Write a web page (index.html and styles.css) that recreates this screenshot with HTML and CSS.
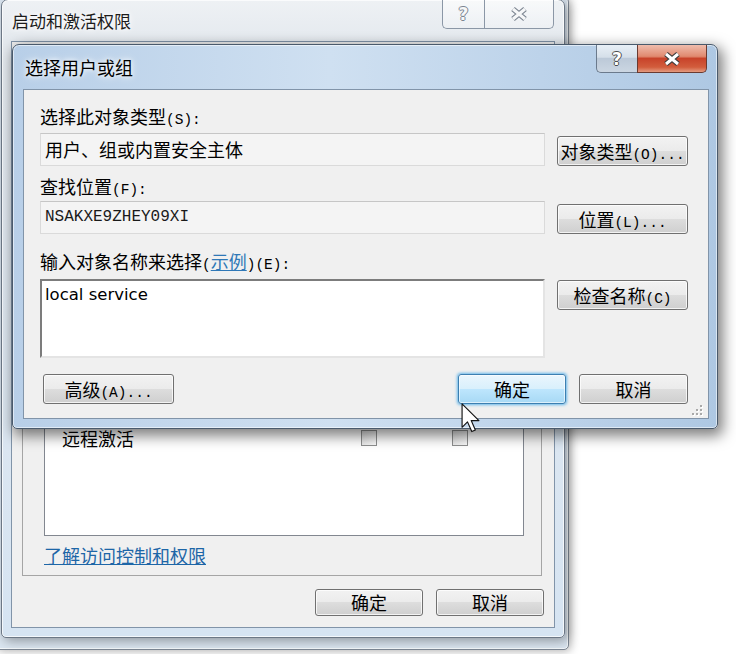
FILE: index.html
```html
<!DOCTYPE html>
<html lang="zh-CN">
<head>
    <meta charset="UTF-8">
    <meta name="viewport" content="width=device-width, initial-scale=1.0">
    <title>选择用户或组</title>
    <link rel="stylesheet" href="styles.css">
</head>
<body>
    <div id="desk">
        <div class="win ghost"></div>

        <div class="win back">
            <div class="tbar">
                <div class="ttl">启动和激活权限</div>
                <div class="caps">
                    <span class="cap help">?</span>
                    <span class="cap close">
                        <svg width="22" height="16" viewBox="0 0 22 16"><path class="xo" d="M5 3 L17 13 M17 3 L5 13"/><path class="xi" d="M5 3 L17 13 M17 3 L5 13"/></svg>
                    </span>
                </div>
            </div>
            <div class="client">
                <div class="page">
                    <!-- rows above this one sit under the front dialog -->
                    <div class="acl">
                        <div class="acl-row"><span>远程激活</span><i class="cb"></i><i class="cb"></i></div>
                    </div>
                    <a class="link" href="#">了解访问控制和权限</a>
                </div>
                <div class="foot">
                    <button class="btn">确定</button>
                    <button class="btn">取消</button>
                </div>
            </div>
        </div>

        <div class="win front">
            <div class="tbar">
                <div class="ttl">选择用户或组</div>
                <div class="caps">
                    <span class="cap help">?</span>
                    <span class="cap close">
                        <svg width="22" height="16" viewBox="0 0 22 16"><path class="xo" d="M5 3 L17 13 M17 3 L5 13"/><path class="xi" d="M5 3 L17 13 M17 3 L5 13"/></svg>
                    </span>
                </div>
            </div>
            <div class="client">
                <div class="lbl">选择此对象类型<span class="k">(S):</span></div>
                <div class="row r1">
                    <div class="field">用户、组或内置安全主体</div>
                    <button class="btn">对象类型<span class="k">(O)...</span></button>
                </div>
                <div class="lbl l2">查找位置<span class="k">(F):</span></div>
                <div class="row r2">
                    <div class="field mono">NSAKXE9ZHEY09XI</div>
                    <button class="btn">位置<span class="k">(L)...</span></button>
                </div>
                <div class="lbl l3">输入对象名称来选择<span class="k">(</span><a class="link" href="#">示例</a><span class="k">)(E):</span></div>
                <div class="row r3">
                    <div class="names">local service</div>
                    <button class="btn">检查名称<span class="k">(C)</span></button>
                </div>
                <div class="row r4">
                    <button class="btn adv">高级<span class="k">(A)...</span></button>
                    <button class="btn def">确定</button>
                    <button class="btn cancel">取消</button>
                </div>
                <svg class="grip" width="12" height="12" viewBox="0 0 12 12">
                    <g fill="#fff"><rect x="10" y="2" width="2" height="2"/><rect x="6" y="6" width="2" height="2"/><rect x="10" y="6" width="2" height="2"/><rect x="2" y="10" width="2" height="2"/><rect x="6" y="10" width="2" height="2"/><rect x="10" y="10" width="2" height="2"/></g>
                    <g fill="#a9a9a9"><rect x="9" y="1" width="2" height="2"/><rect x="5" y="5" width="2" height="2"/><rect x="9" y="5" width="2" height="2"/><rect x="1" y="9" width="2" height="2"/><rect x="5" y="9" width="2" height="2"/><rect x="9" y="9" width="2" height="2"/></g>
                </svg>
            </div>
        </div>

        <svg class="cursor" width="19" height="30" viewBox="0 0 13 21">
            <path d="M0.6 0.6 V17 L4.4 13.2 L7.4 20 L9.9 18.9 L7 12.3 H12.4 Z" fill="#fff" stroke="#111" stroke-width="0.8" stroke-linejoin="round"/>
        </svg>
    </div>
</body>
</html>
```

FILE: styles.css
```css
body{
    margin: 0;
    background: #fff;
    font-family: "Noto Sans CJK SC", sans-serif;
    font-size: 18px;
    color: #000;
}
#desk{
    position: relative;
    width: 736px;
    height: 654px;
    overflow: hidden;
}

/* windows */
.win{
    position: absolute;
    box-sizing: border-box;
    border: 1px solid #56626f;
    border-radius: 7px 7px 5px 5px;
    display: flex;
    flex-direction: column;
}
.ghost{
    left: -5px;
    top: -5px;
    width: 574px;
    height: 655px;
    background: #dbe6f1;
    border-color: #7d8794;
    box-shadow: 2px 2px 8px rgba(0,0,0,.25), inset 0 0 0 1px rgba(255,255,255,.7);
}
.back{
    left: 1px;
    top: -1px;
    width: 564px;
    height: 639px;
    background: linear-gradient(180deg, #eef1f4 0, #e5eaef 40px, #d6e4f2 100%);
    border-color: #6c7785;
    box-shadow: 3px 3px 12px rgba(0,0,0,.35), inset 0 0 0 1px rgba(255,255,255,.7);
}
.front{
    left: 12px;
    top: 44px;
    width: 706px;
    height: 385px;
    background: linear-gradient(90deg, #b8cfe8, #cfe0f1 45%, #bdd3ea 75%, #aec8e3);
    border-color: #4a5a6c;
    box-shadow: 3px 5px 14px 2px rgba(0,0,0,.5), inset 0 0 0 1px rgba(255,255,255,.55);
}

/* title bar */
.tbar{
    flex: none;
    display: flex;
    align-items: center;
    height: 44px;
    padding-left: 12px;
}
.back .tbar{
    height: 41px;
    padding-left: 10px;
}
.ttl{
    flex: 1;
    font-size: 18px;
    line-height: 22px;
    text-shadow: 0 0 8px #fff, 0 0 4px #fff;
}
.back .ttl{
    font-size: 17px;
    color: #1c1c1c;
}
.caps{
    display: flex;
    align-self: flex-start;
    margin-right: 10px;
}
.cap{
    box-sizing: border-box;
    height: 28px;
    display: flex;
    align-items: center;
    justify-content: center;
    border: 1px solid #6b7a8c;
    border-top: none;
}
.help{
    width: 41px;
    border-right: none;
    border-radius: 0 0 0 5px;
    font: bold 17px "DejaVu Sans", sans-serif;
    color: #fff;
    text-shadow: 1px 0 #4d4d4d, -1px 0 #4d4d4d, 0 1px #4d4d4d, 0 -1px #4d4d4d;
}
.close{
    width: 70px;
    border-radius: 0 0 5px 0;
}
.xo{
    fill: none;
    stroke: #3b3b3b;
    stroke-width: 5.5;
}
.xi{
    fill: none;
    stroke: #fff;
    stroke-width: 3;
}
.front .help{
    background: linear-gradient(#e8eff6, #d5dfe9 45%, #bcc9d8 50%, #cbd6e2);
}
.front .close{
    border-color: #6a3a30;
    background: linear-gradient(#efbcad, #e0896f 42%, #c8432a 50%, #d25d3d 82%, #e49b80);
}
.back .cap{
    height: 29px;
    border-color: #8b97a6;
    background: linear-gradient(rgba(255,255,255,.6), rgba(255,255,255,.2));
}
.back .help{
    width: 42px;
    color: #f6f7f8;
    text-shadow: 1px 0 #7c8591, -1px 0 #7c8591, 0 1px #7c8591, 0 -1px #7c8591;
}
.back .xo{
    stroke: #7c8591;
}
.back .xi{
    stroke: #f6f7f8;
}

/* client area */
.client{
    flex: 1;
    min-height: 0;
    position: relative;
    margin: 0 8px 9px 10px;
    border: 1px solid #8194a9;
    background: #f0f0f0;
}
.front .client{
    padding: 15px 20px 14px 16px;
}
.back .client{
    margin: 0 9px 9px 9px;
    display: flex;
    flex-direction: column;
    padding-bottom: 11px;
}

/* buttons */
.btn{
    box-sizing: border-box;
    height: 30px;
    padding: 0;
    border: 1px solid #707070;
    border-radius: 3px;
    background: linear-gradient(#f2f2f2 0%, #ebebeb 49%, #dddddd 50%, #cfcfcf 100%);
    box-shadow: inset 0 0 0 1px rgba(255,255,255,.75);
    font-family: "Noto Sans CJK SC", sans-serif;
    font-size: 18px;
    line-height: 26px;
    color: #000;
    white-space: nowrap;
}
.btn.def{
    border-color: #3c7fb1;
    background: linear-gradient(#eaf6fd 0%, #d9f0fc 49%, #bee6fd 50%, #a7d9f5 100%);
    box-shadow: 0 0 3px 1px #63b6ea, inset 0 0 0 1px rgba(255,255,255,.6);
}
.k{
    font-family: "Liberation Mono", monospace;
    font-size: 14.5px;
    line-height: 1;
}
.link{
    color: #1d66a7;
    text-decoration: underline;
}

/* select-users dialog */
.lbl{
    height: 22px;
    line-height: 22px;
    white-space: nowrap;
}
.l2{
    margin-top: 9px;
}
.l3{
    margin-top: 16px;
}
.l3 .link{
    color: #2f78b7;
}
.row{
    display: flex;
    align-items: flex-end;
    gap: 12px;
}
.row .btn{
    width: 131px;
}
.r1{
    margin-top: 6px;
}
.r2{
    margin-top: 4px;
}
.r3{
    margin-top: 7px;
    align-items: flex-start;
}
.r3 .btn{
    margin-top: 1px;
}
.r4{
    margin-top: 16px;
    gap: 0;
}
.field{
    box-sizing: border-box;
    flex: 0 0 505px;
    height: 33px;
    padding-left: 4px;
    border: 1px solid #dadada;
    border-top-color: #c6c6c6;
    background: #f4f4f4;
    line-height: 31px;
    white-space: nowrap;
}
.field.mono{
    font-family: "Liberation Mono", monospace;
    font-size: 16px;
    color: #1a1a1a;
}
.names{
    box-sizing: border-box;
    flex: 0 0 505px;
    height: 79px;
    padding: 3px 0 0 3px;
    border: 2px solid;
    border-color: #7c7c7c #e4e4e4 #e4e4e4 #7c7c7c;
    background: #fff;
    font-family: "DejaVu Sans", sans-serif;
    font-size: 16.5px;
    line-height: 22px;
}
.r4 .adv{
    margin-left: 3px;
    width: 131px;
}
.r4 .def{
    margin-left: auto;
    width: 108px;
}
.r4 .cancel{
    margin-left: 13px;
    width: 109px;
}
.grip{
    position: absolute;
    right: 5px;
    bottom: 2px;
}

/* launch permissions window */
.page{
    flex: 1;
    display: flex;
    flex-direction: column;
    justify-content: flex-end;
    margin: 8px 12px 0 10px;
    padding: 0 17px 10px 21px;
    border: 1px solid #a5a5a5;
}
.acl{
    box-sizing: border-box;
    height: 183px;
    padding-top: 72px;
    border: 1px solid #828790;
    background: #fff;
}
.acl-row{
    display: grid;
    grid-template-columns: 299px 91px 16px;
    align-items: center;
    height: 24px;
    padding-left: 17px;
    line-height: 24px;
}
.cb{
    display: block;
    box-sizing: border-box;
    width: 16px;
    height: 16px;
    border: 1px solid #8e8f8f;
    background: linear-gradient(135deg, #dcdcdc, #fbfbfb);
}
.page .link{
    align-self: flex-start;
    margin-top: 9px;
    line-height: 20px;
}
.foot{
    display: flex;
    justify-content: flex-end;
    gap: 13px;
    margin-top: 13px;
    padding-right: 10px;
}
.foot .btn{
    width: 108px;
    height: 27px;
    line-height: 23px;
}

.cursor{
    position: absolute;
    left: 461px;
    top: 403px;
}
```
